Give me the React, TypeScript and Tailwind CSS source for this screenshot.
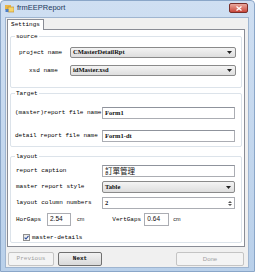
import React from "react";

const mono = "font-['Liberation_Mono',monospace]";
const label = `${mono} text-[6px] text-[#000] whitespace-nowrap shrink-0 leading-none`;
const valueSerif = "font-['Liberation_Serif',serif] text-[6.5px] font-bold text-[#111] leading-none";

function Combo({ value, className = "" }: { value: string; className?: string }) {
  return (
    <div
      className={`h-[11px] flex items-center border border-[#8a8a8a] rounded-[2px] bg-gradient-to-b from-[#f4f4f4] to-[#dedede] pl-[2px] pr-[3px] ${className}`}
    >
      <span className={valueSerif}>{value}</span>
      <svg className="ml-auto" width="5" height="3" viewBox="0 0 5 3">
        <path d="M0 0h5L2.5 3z" fill="#222" />
      </svg>
    </div>
  );
}

function TextBox({ value, className = "", cjk = false }: { value: string; className?: string; cjk?: boolean }) {
  return (
    <div
      className={`h-[12px] flex items-center border border-[#abadb3] border-t-[#8f939c] bg-white pl-[2px] ${className}`}
    >
      <span
        className={
          cjk
            ? "font-['Noto_Sans_CJK_TC',sans-serif] text-[7.5px] text-[#111] leading-none"
            : valueSerif
        }
      >
        {value}
      </span>
    </div>
  );
}

function Group({ title, className, children }: { title: string; className: string; children: React.ReactNode }) {
  return (
    <div className={`relative mx-[2px] border border-[#dce3ea] rounded-[2px] flex flex-col ${className}`}>
      <span className={`${label} absolute -top-[3px] left-[4px] bg-white px-[1px]`}>{title}</span>
      {children}
    </div>
  );
}

export default function App() {
  return (
    <div className="w-[255px] h-[272px] flex flex-col bg-gradient-to-b from-[#cfdff2] to-[#b9d0ea] border border-[#8aa6c8] rounded-t-[4px] overflow-hidden">
      {/* Title bar */}
      <div className="h-[16px] flex items-start shrink-0">
        <svg className="ml-[4px] mt-[3px]" width="9" height="9" viewBox="0 0 9 9">
          <rect x="0" y="1" width="6" height="5" fill="#e8b64a" />
          <rect x="3" y="3" width="6" height="5" fill="#f6d46a" stroke="#b8862a" strokeWidth="0.6" />
          <rect x="0.5" y="5" width="3" height="3" fill="#4d7fc9" />
        </svg>
        <span className="ml-[3px] mt-[3px] font-['Liberation_Sans',sans-serif] text-[7.5px] text-[#1e395b] leading-none">
          frmEEPReport
        </span>
        <div className="ml-auto mr-[6px] mt-[2px] w-[19px] h-[10px] rounded-[2px] border border-[#7a2e29] bg-gradient-to-b from-[#e8a89e] to-[#c8453b] flex items-center justify-center">
          <svg width="6" height="5" viewBox="0 0 6 5">
            <path d="M0.5 0.5L5.5 4.5M5.5 0.5L0.5 4.5" stroke="#fff" strokeWidth="1.3" />
          </svg>
        </div>
      </div>

      {/* Client area */}
      <div className="ml-[4px] mr-[5px] h-[251px] bg-[#f0f0f0] border border-[#9fb5d0] flex flex-col">
        <div className="mt-[1px] ml-[1px] w-[37px] h-[11px] bg-white border border-[#898c95] border-b-0 flex items-center justify-center relative z-10 -mb-[1px]">
          <span className={label}>Settings</span>
        </div>

        <div className="ml-[1px] mr-[3px] h-[218px] bg-white border border-[#898c95] flex flex-col">
          {/* source */}
          <Group title="source" className="mt-[6px] h-[52px] pt-[10px]">
            <div className="flex items-center h-[11px]">
              <span className={`${label} w-[59px] pl-[8px]`}>project name</span>
              <Combo value="CMasterDetailRpt" className="w-[166px]" />
            </div>
            <div className="flex items-center h-[11px] mt-[7px]">
              <span className={`${label} w-[59px] pl-[18px]`}>xsd name</span>
              <Combo value="idMaster.xsd" className="w-[166px]" />
            </div>
          </Group>

          {/* Target */}
          <Group title="Target" className="mt-[5px] h-[54px] pt-[13px]">
            <div className="flex items-center h-[12px]">
              <span className={`${label} w-[91px] pl-[4px]`}>(master)report file name</span>
              <TextBox value="Form1" className="w-[133px]" />
            </div>
            <div className="flex items-center h-[12px] mt-[11px]">
              <span className={`${label} w-[91px] pl-[4px]`}>detail report file name</span>
              <TextBox value="Form1-dt" className="w-[133px]" />
            </div>
          </Group>

          {/* layout */}
          <Group title="layout" className="mt-[9px] h-[87px] pt-[8px]">
            <div className="flex items-center h-[12px]">
              <span className={`${label} w-[91px] pl-[5px]`}>report caption</span>
              <TextBox value="訂單管理" cjk className="w-[133px]" />
            </div>
            <div className="flex items-center h-[12px] mt-[4px]">
              <span className={`${label} w-[91px] pl-[5px]`}>master report style</span>
              <Combo value="Table" className="w-[133px] h-[12px]" />
            </div>
            <div className="flex items-center h-[12px] mt-[4px]">
              <span className={`${label} w-[91px] pl-[5px]`}>layout column numbers</span>
              <div className="w-[133px] h-[12px] flex items-center border border-[#abadb3] bg-white pl-[2px]">
                <span className={valueSerif}>2</span>
                <div className="ml-auto mr-[1px] w-[7px] h-[10px] flex flex-col gap-[1px] items-center justify-center">
                  <svg width="4" height="2" viewBox="0 0 4 2">
                    <path d="M0 2h4L2 0z" fill="#555" />
                  </svg>
                  <svg width="4" height="2" viewBox="0 0 4 2">
                    <path d="M0 0h4L2 2z" fill="#555" />
                  </svg>
                </div>
              </div>
            </div>
            <div className="flex items-center h-[13px] mt-[4px]">
              <span className={`${label} w-[36px] pl-[5px]`}>HorGaps</span>
              <div className="w-[24px] h-[13px] flex items-center border border-[#abadb3] bg-white pl-[2px]">
                <span className="font-['Liberation_Sans',sans-serif] text-[6.5px] text-[#111] leading-none">2.54</span>
              </div>
              <span className="ml-[6px] font-['Liberation_Sans',sans-serif] text-[5.5px] text-[#222] leading-none">cm</span>
              <span className={`${label} ml-[28px] w-[32px]`}>VertGaps</span>
              <div className="w-[25px] h-[13px] flex items-center border border-[#abadb3] bg-white pl-[2px]">
                <span className="font-['Liberation_Sans',sans-serif] text-[6.5px] text-[#111] leading-none">0.64</span>
              </div>
              <span className="ml-[4px] font-['Liberation_Sans',sans-serif] text-[5.5px] text-[#222] leading-none">cm</span>
            </div>
            <div className="flex items-center h-[7px] mt-[8px] pl-[12px]">
              <div className="w-[7px] h-[7px] border border-[#8f8f8f] bg-gradient-to-br from-[#e4e4e4] to-white flex items-center justify-center">
                <svg width="5" height="5" viewBox="0 0 5 5">
                  <path d="M0.6 2.6L2 4L4.5 0.8" stroke="#2d4d9a" strokeWidth="1.1" fill="none" />
                </svg>
              </div>
              <span className={`${label} ml-[2px]`}>master-details</span>
            </div>
          </Group>
        </div>

        {/* Buttons */}
        <div className="mt-[5px] h-[14px] flex">
          <div className="ml-[2px] w-[46px] h-[14px] border border-[#c4c4c4] rounded-[2px] bg-[#f4f4f4] flex items-center justify-center">
            <span className={`${mono} text-[6px] text-[#a0a0a0] leading-none`}>Previous</span>
          </div>
          <div className="ml-[4px] w-[44px] h-[14px] border border-[#707070] rounded-[2px] bg-gradient-to-b from-[#f2f2f2] to-[#d9d9d9] flex items-center justify-center">
            <span className={`${mono} text-[6px] font-bold text-[#111] leading-none`}>Next</span>
          </div>
          <div className="ml-auto mr-[4px] w-[68px] h-[14px] border border-[#c4c4c4] rounded-[2px] bg-[#f4f4f4] flex items-center justify-center">
            <span className="font-['Liberation_Sans',sans-serif] text-[6px] text-[#a0a0a0] leading-none">Done</span>
          </div>
        </div>
      </div>
    </div>
  );
}
